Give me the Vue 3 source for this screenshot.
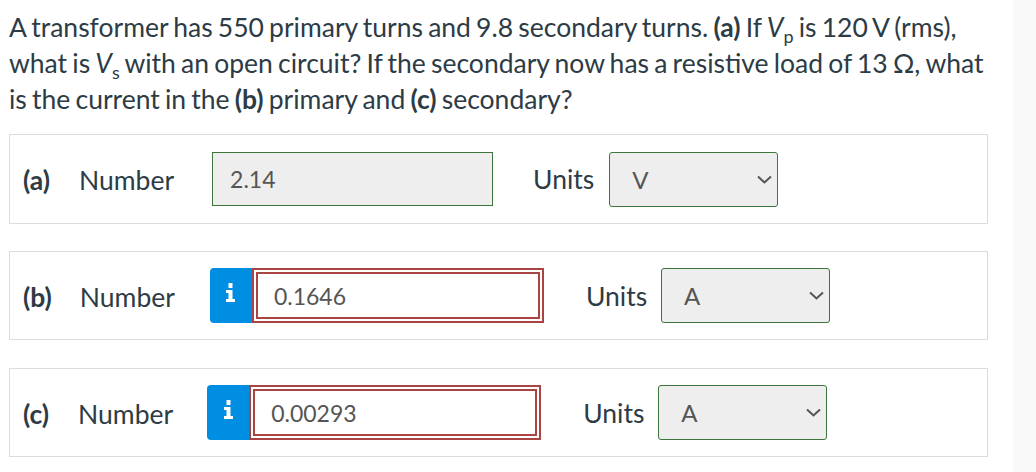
<script setup>
import { ref } from 'vue'

// answer rows: graded state comes from whether the row carries the info button
const rows = ref([
  { id: 'a', label: '(a)', value: '2.14', unit: 'V', hasInfo: false },
  { id: 'b', label: '(b)', value: '0.1646', unit: 'A', hasInfo: true },
  { id: 'c', label: '(c)', value: '0.00293', unit: 'A', hasInfo: true }
])
</script>

<template>
  <div class="page">
    <p class="question">
      A transformer has 550 primary turns and 9.8 secondary turns. <b>(a)</b> If <i>V</i><sub>p</sub> is 120 V (rms),
      what is <i>V</i><sub>s</sub> with an open circuit? If the secondary now has a resistive load of 13 Ω, what
      is the current in the <b>(b)</b> primary and <b>(c)</b> secondary?
    </p>

    <div v-for="row in rows" :key="row.id" :class="['answer-row', 'row-' + row.id]">
      <b class="part">{{ row.label }}</b>
      <span class="number-label">Number</span>
      <button v-if="row.hasInfo" class="info-btn" type="button" aria-label="Info">
        <svg width="9" height="19" viewBox="0 0 9 19">
          <path fill="#fff" d="M2.5 0h4v5h-4zM0 7h6.5v9H9v3H0v-3h2.5v-6H0z" />
        </svg>
      </button>
      <input :class="['value-input', row.hasInfo ? 'wrong' : 'correct']" :value="row.value" readonly />
      <span class="units-label">Units</span>
      <div class="select-wrap">
        <select class="unit-select">
          <option>{{ row.unit }}</option>
        </select>
        <svg class="chevron" width="15" height="9" viewBox="0 0 15 9">
          <path fill="none" stroke="#555" stroke-width="2" d="M1 1.5l6.5 6 6.5-6" />
        </svg>
      </div>
    </div>
  </div>
</template>

<style scoped>
.page {
  box-sizing: border-box;
  width: 1013px;
  height: 472px;
  padding: 9px 25px 0 9px;
  background: #fff;
  font-family: Lato, "Liberation Sans", sans-serif;
  color: #2d3b45;
  overflow: hidden;
}

.question {
  margin: 0 0 17px;
  font-size: 26.5px;
  line-height: 36px;
  word-spacing: -1.6px;
  white-space: pre-line;
}

.question sub {
  font-size: 18px;
  line-height: 0;
}

.answer-row {
  box-sizing: border-box;
  display: flex;
  align-items: center;
  height: 89px;
  margin-bottom: 28px;
  padding-left: 13px;
  border: 1px solid #dcdcdc;
  font-size: 26.5px;
}

.row-a {
  height: 90px;
  margin-bottom: 27px;
}

.part {
  padding-top: 2px;
  font-weight: 700;
}

.number-label {
  margin-left: 29px;
  padding-top: 2px;
}

.row-b .number-label {
  margin-left: 28px;
}

.value-input {
  box-sizing: border-box;
  height: 55px;
  padding: 0 17px;
  font: inherit;
  font-size: 23px;
  color: #555;
  outline: none;
  border-radius: 0;
}

.value-input.correct {
  width: 281px;
  height: 54px;
  margin-left: 38px;
  background: #eee;
  border: 1px solid #3c763d;
}

.value-input.wrong {
  width: 292px;
  padding-left: 16px;
  background: #fff;
  border: 6px double #a94442;
}

.info-btn {
  display: flex;
  align-items: center;
  justify-content: center;
  width: 42px;
  height: 55px;
  margin-left: 34px;
  padding: 0 0 6px;
  border: none;
  border-radius: 4px 0 0 4px;
  background: #008ee2;
}

.row-b .info-btn {
  margin-left: 35px;
}

.units-label {
  margin-left: 42px;
}

.row-a .units-label {
  margin-left: 40px;
}

.select-wrap {
  position: relative;
  margin-left: 14px;
}

.row-a .select-wrap {
  margin-left: 15px;
}

.unit-select {
  display: block;
  appearance: none;
  box-sizing: border-box;
  width: 169px;
  height: 55px;
  padding: 0 22px;
  font: inherit;
  font-size: 24px;
  color: #555;
  background-color: #eee;
  border: 1px solid #3c763d;
  border-radius: 3px;
}

.chevron {
  position: absolute;
  top: 23px;
  right: 6px;
  pointer-events: none;
}
</style>

<style>
html,
body {
  background: #f9f9f9;
}
</style>
